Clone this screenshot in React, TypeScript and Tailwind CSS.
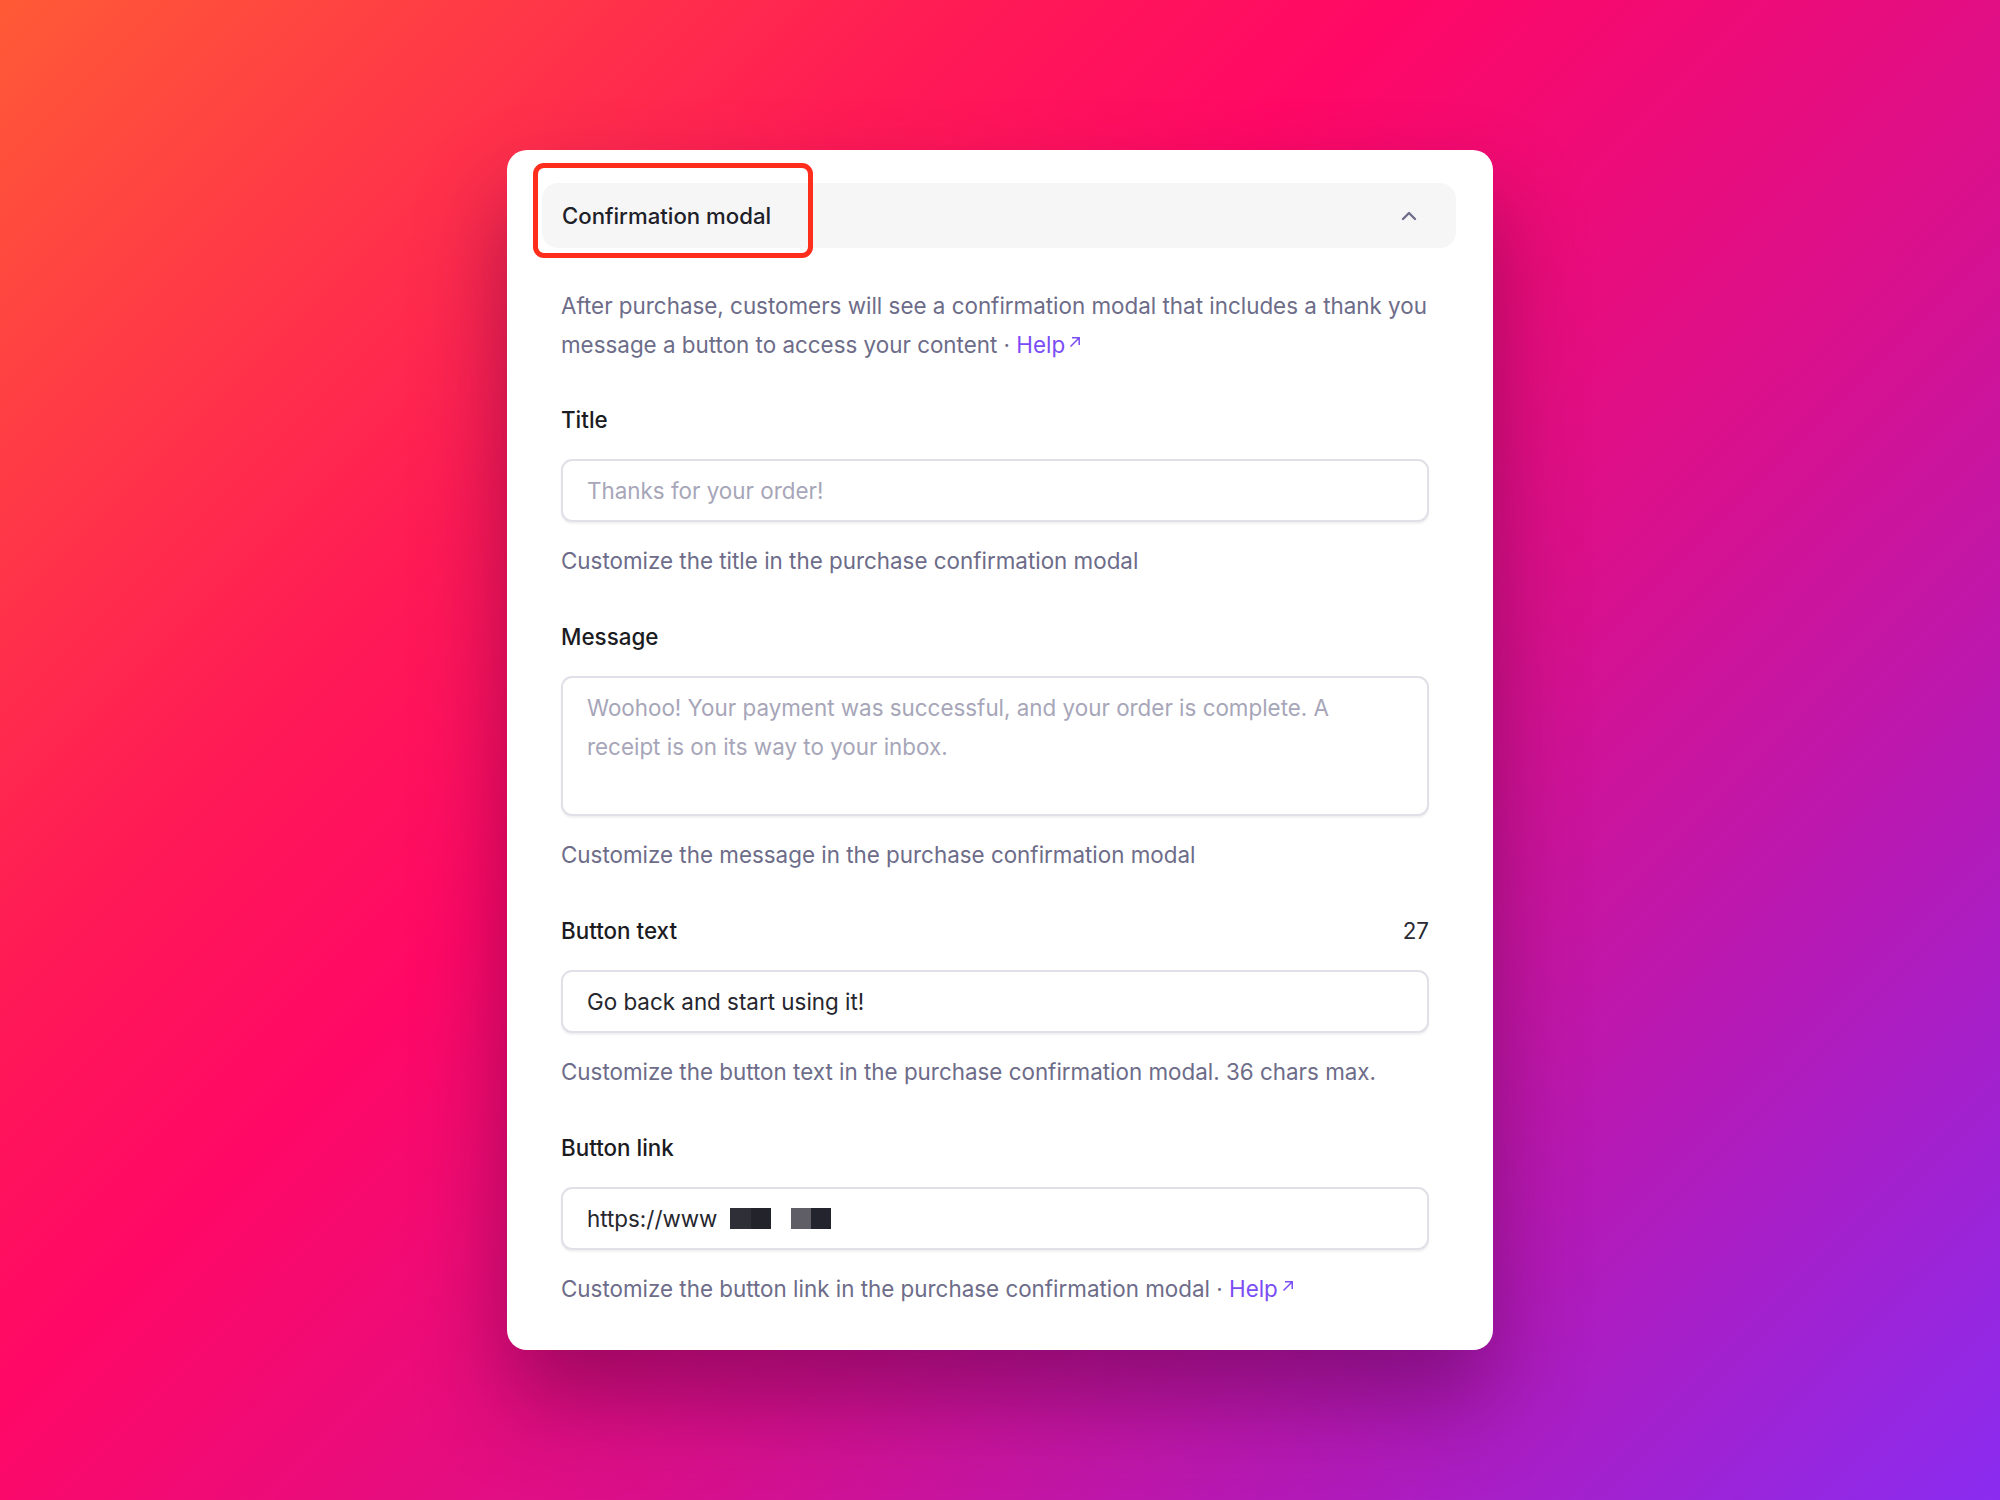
import React from 'react';
import { ChevronUp } from 'lucide-react';

const HelpLink: React.FC = () => (
  <a className="text-[#7b4df5]" href="#">
    Help
    <svg width="12" height="12" viewBox="0 0 12 12" className="ml-[4px] inline-block align-[5px]" fill="none" stroke="currentColor" strokeWidth="1.5">
      <path d="M1.5 10.5 10 2M3 1.8h7.2V9" />
    </svg>
  </a>
);

const Field: React.FC<{ label: string; counter?: string; helper: React.ReactNode; children: React.ReactNode }> = ({
  label,
  counter,
  helper,
  children,
}) => (
  <div className="flex flex-col">
    <div className="flex items-center justify-between leading-[30px] text-[22.4px]">
      <span className="font-medium text-[#1b1b22]">{label}</span>
      {counter && <span className="text-[#2a2a33]">{counter}</span>}
    </div>
    <div className="mt-6">{children}</div>
    <p className="mt-6 text-[22.4px] leading-[30px] text-[#6d6c89]">{helper}</p>
  </div>
);

const inputBox =
  'w-full rounded-[11px] border-2 border-[#e0e0e8] bg-white shadow-[0_2px_2px_rgba(0,0,0,0.06)] px-[24px] text-[22.4px]';

export default function App() {
  return (
    <div
      className="min-h-[1500px] w-full flex justify-center pt-[150px] bg-[linear-gradient(135deg,#ff5a36_0%,#ff1a55_28%,#ff0866_40%,#d9108c_62%,#b31ab8_80%,#8a2cf0_100%)]"
      style={{ fontFamily: 'Inter, "Noto Sans", sans-serif' }}
    >
      <div className="relative w-[986px] h-[1200px] rounded-[20px] bg-white pt-[33px] pl-[35px] pr-[37px] shadow-[0_50px_90px_rgba(70,0,60,0.45)]">
        {/* Accordion header */}
        <div className="flex h-[65px] items-center justify-between rounded-[16px] bg-[#f6f6f7] pl-[20px] pr-[35px]">
          <span className="text-[22.2px] font-medium text-[#202028]">Confirmation modal</span>
          <ChevronUp size={24} strokeWidth={2.4} className="text-[#6e6d8a]" />
        </div>

        {/* highlight */}
        <div className="absolute left-[26px] top-[13px] h-[95px] w-[280px] rounded-[11px] border-[5px] border-[#ff2d1c]" />

        <div className="pl-[19px] pr-[27px]">
          <p className="mt-[38px] text-[22.4px] leading-[39px] text-[#6d6c89]">
            After purchase, customers will see a confirmation modal that includes a thank you message a button to
            access your content · <HelpLink />
          </p>

          <div className="mt-[41px] flex flex-col gap-[46px]">
            <Field label="Title" helper="Customize the title in the purchase confirmation modal">
              <div className={`${inputBox} flex h-[63px] items-center text-[#a7a6b9]`}>Thanks for your order!</div>
            </Field>

            <Field label="Message" helper="Customize the message in the purchase confirmation modal">
              <div className={`${inputBox} h-[140px] pt-[10px] leading-[39px] text-[#a7a6b9]`}>
                Woohoo! Your payment was successful, and your order is complete. A receipt is on its way to your inbox.
              </div>
            </Field>

            <Field
              label="Button text"
              counter="27"
              helper="Customize the button text in the purchase confirmation modal. 36 chars max."
            >
              <div className={`${inputBox} flex h-[63px] items-center text-[#26262e]`}>Go back and start using it!</div>
            </Field>

            <Field
              label="Button link"
              helper={
                <>
                  Customize the button link in the purchase confirmation modal · <HelpLink />
                </>
              }
            >
              <div className={`${inputBox} flex h-[63px] items-center text-[#26262e]`}>
                <span>https://www</span>
                <span className="ml-[13px] flex h-[21px] w-[41px]">
                  <span className="w-1/2 bg-[#2f2f37]" />
                  <span className="w-1/2 bg-[#23232c]" />
                </span>
                <span className="ml-[20px] flex h-[21px] w-[40px]">
                  <span className="w-1/2 bg-[#5f5e66]" />
                  <span className="w-1/2 bg-[#24242e]" />
                </span>
              </div>
            </Field>
          </div>
        </div>
      </div>
    </div>
  );
}
